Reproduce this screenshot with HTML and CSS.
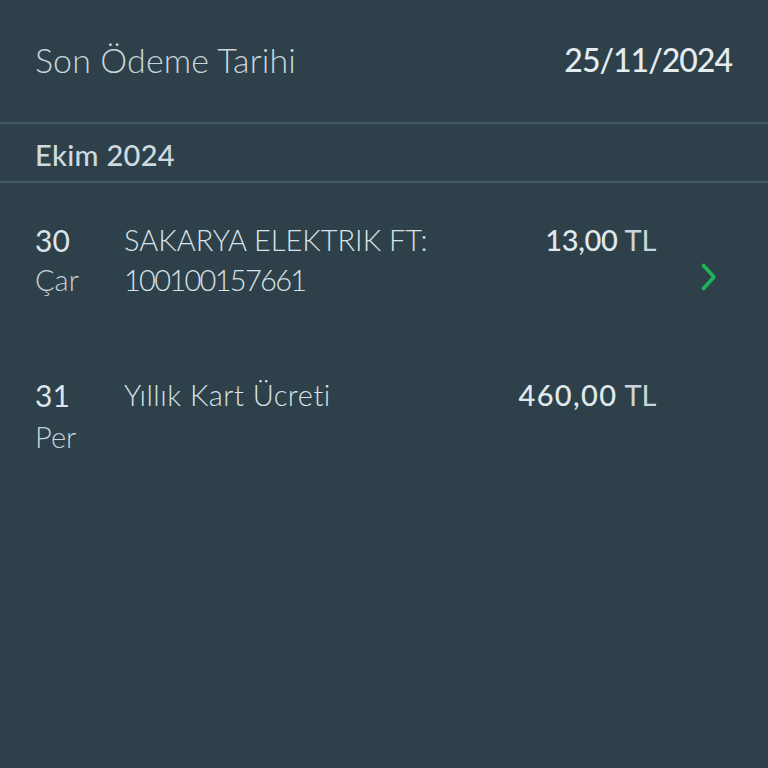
FILE: index.html
```html
<!DOCTYPE html>
<html lang="tr">
<head>
<meta charset="utf-8">
<link rel="stylesheet" href="styles.css">
</head>
<body>
<div class="screen">
  <div class="due">
    <span class="due-label">Son Ödeme Tarihi</span>
    <span class="due-date">25/11/2024</span>
  </div>
  <div class="month">Ekim 2024</div>
  <div class="list">
    <div class="tx">
      <div class="day"><span class="num">30</span><span class="wd">Çar</span></div>
      <div class="desc">SAKARYA ELEKTRIK FT:<br><span class="ref">100100157661</span></div>
      <div class="amt">13,00 <span class="cur">TL</span></div>
      <div class="chev">
        <svg width="18" height="30" viewBox="0 0 18 30"><path d="M3.5 3.5 L14 15 L3.5 26.5" fill="none" stroke="#1fb45a" stroke-width="3.6" stroke-linecap="round" stroke-linejoin="round"/></svg>
      </div>
    </div>
    <div class="tx">
      <div class="day"><span class="num">31</span><span class="wd wd-low">Per</span></div>
      <div class="desc desc-wide">Yıllık Kart Ücreti</div>
      <div class="amt"><span class="amt-wide">460,00</span> <span class="cur">TL</span></div>
      <div class="chev"></div>
    </div>
  </div>
</div>
</body>
</html>
```
FILE: styles.css
```css
html, body {
  margin: 0;
  padding: 0;
  background: #2e404a;
}
body {
  width: 768px;
  height: 768px;
  overflow: hidden;
  font-family: Lato, "Noto Sans", sans-serif;
  color: #d5e0e6;
}
.screen {
  display: flex;
  flex-direction: column;
}
.due {
  height: 124px;
  display: flex;
  align-items: center;
  justify-content: space-between;
  padding: 0 35px 0 35px;
  box-sizing: border-box;
  border-bottom: 2px solid #435862;
}
.due-label {
  font-size: 34px;
  font-weight: 300;
  color: #c9d5db;
  margin-top: -3px;
  letter-spacing: 0.1px;
}
.due-date {
  font-size: 32px;
  font-weight: 500;
  letter-spacing: -1px;
  color: #e4ecf0;
  margin-top: -3px;
  margin-right: 1px;
}
.month {
  height: 59px;
  box-sizing: border-box;
  padding: 4px 35px 0;
  display: flex;
  align-items: center;
  font-size: 29px;
  font-weight: 500;
  letter-spacing: 0.3px;
  color: #cfdae0;
  border-bottom: 2px solid #435862;
}
.list {
  display: flex;
  flex-direction: column;
}
.tx {
  display: grid;
  grid-template-columns: 89px 1fr auto 112px;
  padding: 37px 0 0 35px;
  height: 155px;
  box-sizing: border-box;
}
.day {
  display: flex;
  flex-direction: column;
}
.num {
  font-size: 30px;
  line-height: 40px;
  color: #dbe5ea;
}
.wd {
  font-size: 29px;
  line-height: 40px;
  font-weight: 300;
  color: #c5d1d8;
}
.wd-low {
  line-height: 44px;
}
.desc {
  font-size: 29px;
  line-height: 40px;
  font-weight: 300;
  color: #d8e2e7;
}
.desc-wide {
  letter-spacing: 0.5px;
}
.ref {
  letter-spacing: -1.7px;
}
.amt {
  font-size: 29px;
  line-height: 40px;
  font-weight: 500;
  letter-spacing: -0.3px;
  color: #e0e9ed;
  white-space: nowrap;
}
.amt-wide {
  letter-spacing: 1.4px;
}
.cur {
  font-weight: 400;
  color: #c9d5db;
}
.chev {
  display: flex;
  align-items: flex-start;
  padding-top: 42px;
  padding-left: 44px;
}
```
